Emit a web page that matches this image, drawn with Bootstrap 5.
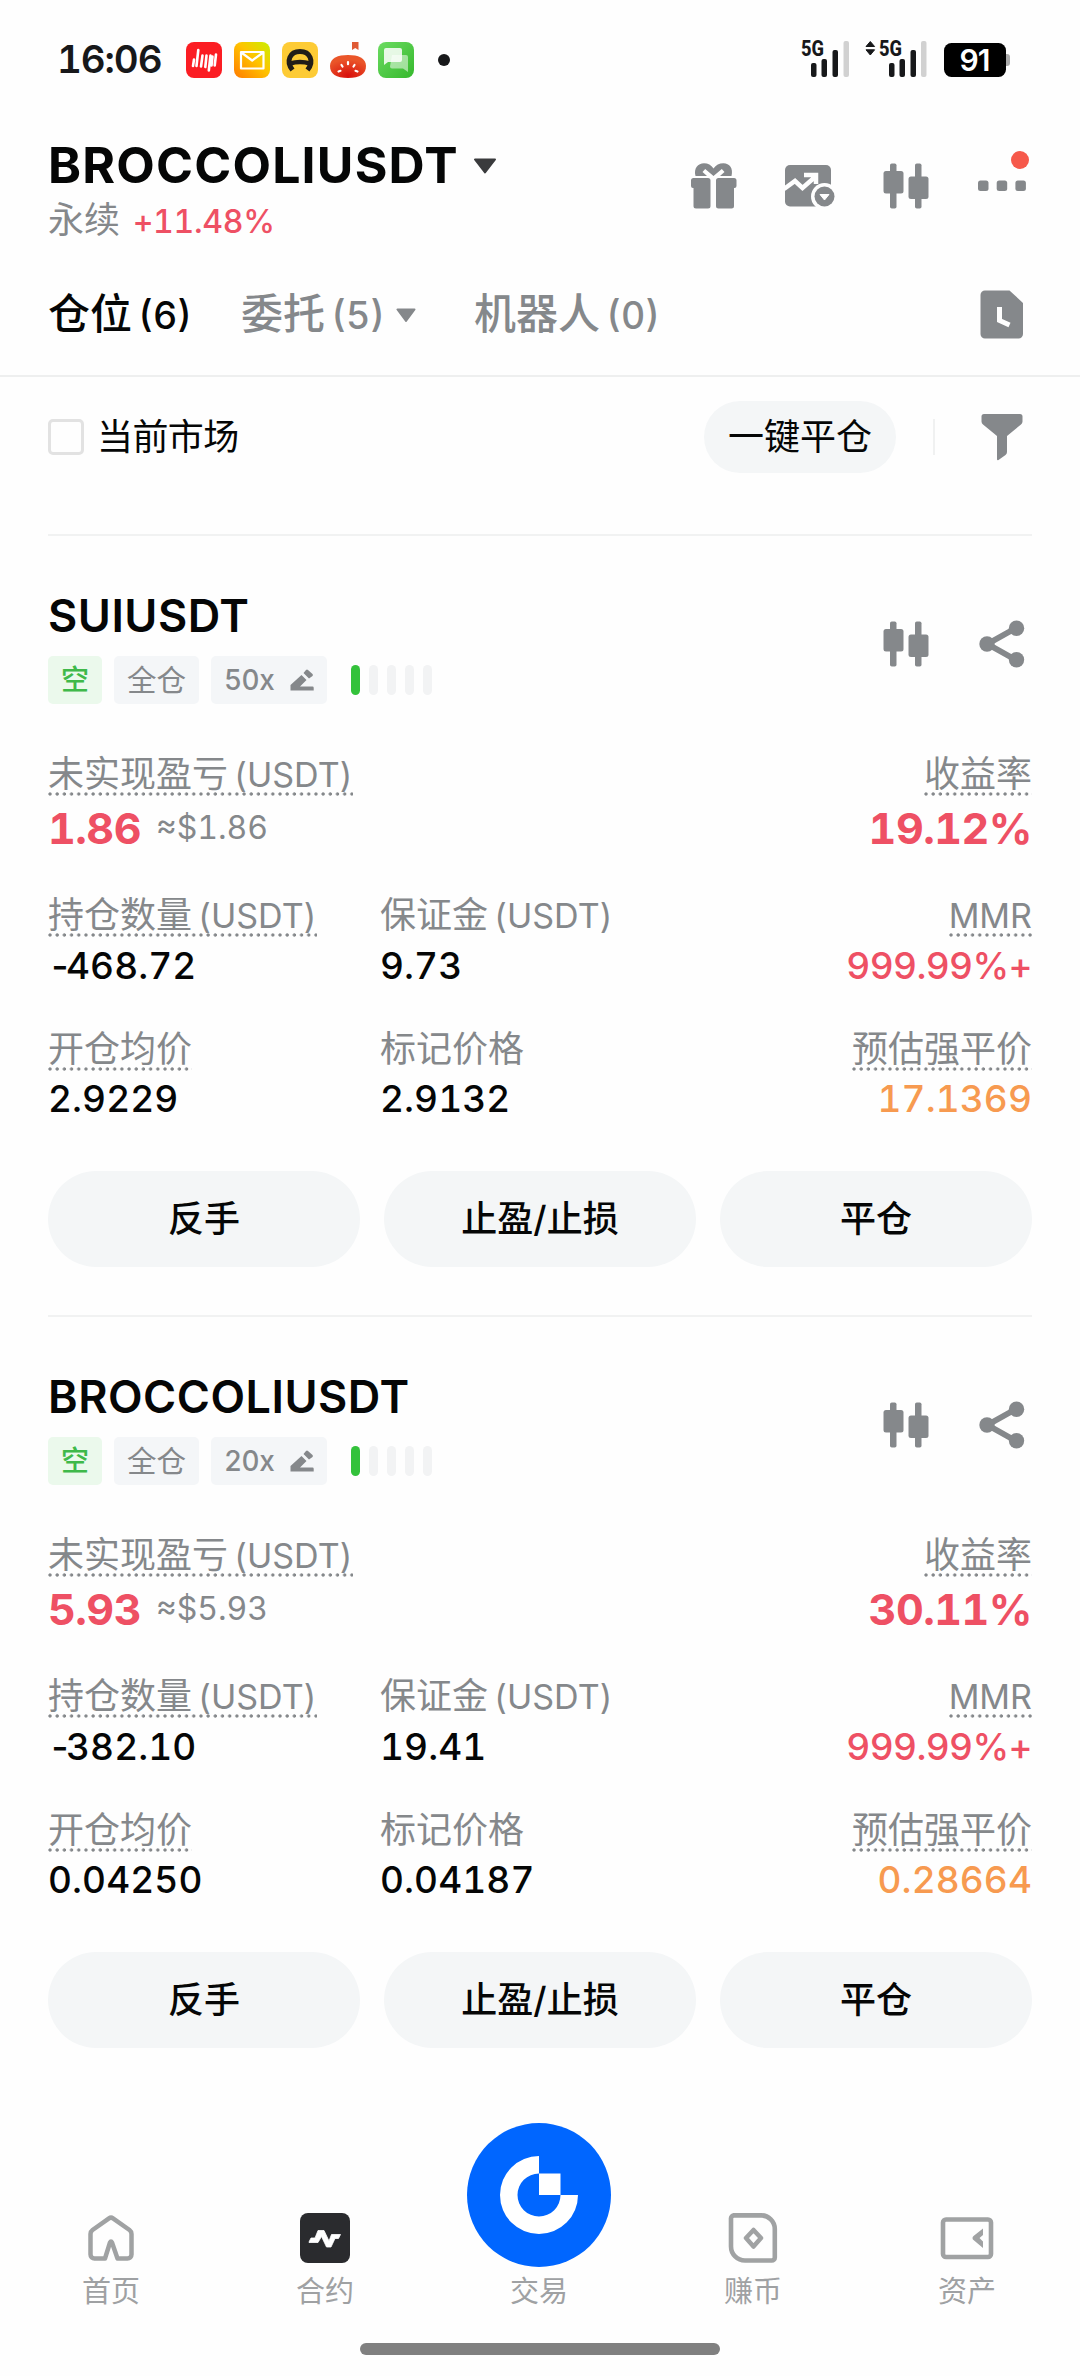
<!DOCTYPE html>
<html lang="zh-CN">
<head>
<meta charset="utf-8">
<meta name="viewport" content="width=device-width, initial-scale=1">
<title>仓位</title>
<link href="https://cdn.jsdelivr.net/npm/bootstrap@5.3.0/dist/css/bootstrap.min.css" rel="stylesheet">
<style>
body{width:1080px;height:2376px;overflow:hidden;background:#fefefe;color:#050606;font-family:Inter,"Noto Sans CJK SC",sans-serif;font-variant-numeric:tabular-nums}
svg{display:block;flex:none}
.gy{color:#85888b}.up{color:#ee5064}.warn{color:#f79a50}
.lat{font-size:.945em}
.statusbar{height:120px;padding:0 66px 0 57px;color:#17181a}
.clock{font-size:38.5px;font-weight:600;line-height:46px;height:48px;width:129px;letter-spacing:-1.1px}
.apps{gap:12px}
.pairhead{height:136px;padding:0 54px 0 48px}
.pairtext{padding-top:15px}
.pairname{font-size:50px;font-weight:700;line-height:60px;letter-spacing:1.2px;margin-bottom:1px}
.pairsub{font-size:36px;line-height:48px;word-spacing:3px}
.pct{font-size:32px;font-weight:500;letter-spacing:-.3px}
.headicons{gap:46px;padding-top:42px}
.reddot{position:absolute;width:18px;height:18px;border-radius:50%;background:#f6594b;right:-3px;top:-11px}
.tabrow{height:121px;padding:0 54px 2px 48px;border-bottom:2px solid #eeefef;font-size:42px;line-height:60px;font-weight:500;word-spacing:-5px}
.tabrow .lat{font-size:37.5px}
.tab2{width:233px;gap:11px}
.filterrow{height:157px;padding:24px 54px 0 48px}
.filterrow>div{height:72px}
.tick{width:36px;height:36px;border:3px solid #e2e2e2;border-radius:5px}
.ticklabel{font-size:36px;margin-left:13px;letter-spacing:-.6px}
.pillbtn,.actbtn{background:#f4f6f7;border:0;border-radius:50px;color:#050606;font-size:36px}
.pillbtn{width:192px;height:72px;padding:0;margin-right:37px}
.vrule{width:2px;height:36px;background:#f0f1f1;margin-right:43px}
.position{height:781px;margin:0 48px;border-top:2px solid #f1f2f2;padding-top:52px}
.symname{font-size:45px;font-weight:600;line-height:56px;letter-spacing:.5px}
.tags{margin-top:12px;gap:12px}
.tag{height:48px;line-height:48px;font-size:29.5px;background:#f4f6f8;border-radius:5px;color:#85888b;padding:0 13px}
.tag.short{background:#ebf9ec;color:#3fb94a;font-size:28px;font-weight:500}
.tag .lat{font-weight:500;letter-spacing:-.5px}
.risks{gap:9px;margin-left:12px}
.risk{width:9px;height:30px;border-radius:5px;background:#f2f3f4}
.risk.on{background:#33c23b}
.cardicons{gap:48px;padding:32px 6px 0 0}
.lbl{font-size:36px;line-height:50px;height:50px;color:#85888b;white-space:nowrap;word-spacing:-4px}
.lbl .tip{display:inline-block;height:50px;background:radial-gradient(circle at 2px 2px,#85888b 1.3px,transparent 2px) 0 43px/7.2px 4px repeat-x}
.big{font-size:43px;font-weight:700;line-height:52px;height:52px;margin-top:3px;letter-spacing:-.5px}
.big .approx{font-size:32px;font-weight:400;line-height:44px;letter-spacing:0;margin-left:15px}
.val{font-size:37px;font-weight:500;line-height:48px;margin-top:1.5px;letter-spacing:.1px}
.val.up{letter-spacing:-.6px}
.neg{letter-spacing:-6px}
.r1{margin-top:45px}.r2{margin-top:36px}.r3{margin-top:34px}
.c1{width:332px}.c2{flex:1}
.acts{margin-top:48px;gap:24px}
.actbtn{flex:1;height:96px;font-weight:500;padding:0;line-height:96px}
.tabbar{height:282px;padding:27px 6px 0 4px;color:#9fa1a3;font-size:29px;position:relative}
.tabbar>div{flex:1;padding-top:90px}
.tabbar>.mid{padding-top:0}
.tabbar .t{line-height:40px;margin-top:9px}
.homebar{position:absolute;left:360px;top:247px;width:360px;height:12px;border-radius:6px;background:#808080}
</style>
<script src="https://cdn.jsdelivr.net/npm/bootstrap@5.3.0/dist/js/bootstrap.bundle.min.js"></script>
</head>
<body>
<svg width="0" height="0" class="position-absolute">
<defs>
<linearGradient id="mailg" x1="1" y1="0" x2="0" y2="1"><stop offset="0" stop-color="#c8f000"/><stop offset=".45" stop-color="#ffc400"/><stop offset="1" stop-color="#ff7a00"/></linearGradient>
<linearGradient id="msgg" x1="0" y1="0" x2="1" y2="1"><stop offset="0" stop-color="#6cdc62"/><stop offset="1" stop-color="#35b82c"/></linearGradient>
<radialGradient id="tomg" cx=".5" cy=".9" r=".7"><stop offset="0" stop-color="#d80f0c"/><stop offset="1" stop-color="#ea5529"/></radialGradient>
<symbol id="candles" viewBox="0 0 48 48"><g fill="#85888b"><rect x="8" y="1.500" width="6.500" height="45" rx="1.800"/><rect x="1.500" y="9" width="20" height="22.500" rx="2.500"/><rect x="33" y="1.500" width="6.500" height="45" rx="1.800"/><rect x="26.500" y="14.500" width="20" height="22.500" rx="2.500"/></g></symbol>
<symbol id="share" viewBox="0 0 48 48"><path d="M38 8 9.500 24 38 40" fill="none" stroke="#85888b" stroke-width="6"/><g fill="#85888b"><circle cx="38.500" cy="8.300" r="7.700"/><circle cx="9" cy="24" r="7.700"/><circle cx="38.500" cy="39.700" r="7.700"/></g></symbol>
<symbol id="pen" viewBox="0 0 24 24"><path d="M.5 22.500v-5.500L11.500 7l5 5-6.500 6.500H22.500a1.200 1.200 0 0 1 1.200 1.200v2.800zM13.500 5l2.500-3a1.500 1.500 0 0 1 2 0l4.500 4a1.500 1.500 0 0 1 0 2L19 10.500z" fill="#85888b"/></symbol>
</defs>
</svg>

<header class="statusbar d-flex align-items-center">
  <div class="clock">16:06</div>
  <div class="apps d-flex align-items-center">
    <svg width="36" height="36" viewBox="0 0 36 36"><rect width="36" height="36" rx="8" fill="#fb1d23"/><g stroke="#fff" stroke-width="2.600" stroke-linecap="round"><path d="M8 17.500 7 24M12.300 8 10.500 24M16.500 13.500 15 24.500M20.500 13.500 19.300 25M24.500 13.500 22.800 28.500M30 12.500 28.700 23.500M26.500 14.500l-1 9"/></g></svg>
    <svg width="36" height="36" viewBox="0 0 36 36"><rect width="36" height="36" rx="8" fill="url(#mailg)"/><path d="M7 10h22.500v16.500H7zM8 11l10.200 7.500L28.500 11" fill="none" stroke="#fff" stroke-width="2.200" stroke-linejoin="round"/></svg>
    <svg width="36" height="36" viewBox="0 0 36 36"><rect width="36" height="36" rx="8" fill="#fdcb35"/><path d="M10.500 28C3.500 19 8 9.500 18 9.500S32.500 19 25.500 28" fill="none" stroke="#211d18" stroke-width="5"/><path d="M8 21.500q10-3 20 0" fill="none" stroke="#211d18" stroke-width="4.500"/></svg>
    <svg width="36" height="36" viewBox="0 0 36 36"><path d="M22 0h6.500v8l-3.250-2L22 8z" fill="#df5a35"/><path d="M0 24C0 16 8 13 18 13s18 3 18 11-6 12-18 12S0 32 0 24z" fill="url(#tomg)"/><g stroke="#fff" stroke-width="2.200" stroke-linecap="round"><path d="M18 20v2.200M11.500 23l1 1.500M24.500 23l-1 1.500M8.500 29.500l2-.7M27.500 29.500l-2-.7"/></g></svg>
    <svg width="36" height="36" viewBox="0 0 36 36"><rect width="36" height="36" rx="8" fill="url(#msgg)"/><path d="M14 13h14a2 2 0 0 1 2 2v15l-5-3.500H14a2 2 0 0 1-2-2z" fill="#fff" opacity=".5"/><path d="M6 8a2 2 0 0 1 2-2h14a2 2 0 0 1 2 2v10a2 2 0 0 1-2 2H10l-4 3z" fill="#fff" opacity=".85"/></svg>
  </div>
  <svg class="ms-4" width="12" height="12"><circle cx="6" cy="6" r="6" fill="#17181a"/></svg>
  <svg class="ms-auto" width="214" height="48" viewBox="0 0 214 48"><g fill="#17181a"><text x="1" y="20" font-family="Roboto" font-weight="800" font-size="22" textLength="23" lengthAdjust="spacingAndGlyphs">5G</text><rect x="11" y="27" width="5.500" height="14" rx="2"/><rect x="21.500" y="23" width="5.500" height="18" rx="2"/><rect x="32.500" y="14" width="5.500" height="27" rx="2"/><text x="79" y="20" font-family="Roboto" font-weight="800" font-size="22" textLength="23" lengthAdjust="spacingAndGlyphs">5G</text><path d="M66 10.500 70.300 5.500l4.300 5zM66 13.800h8.600L70.300 19z" stroke="#17181a" stroke-width="1" stroke-linejoin="round"/><rect x="89" y="27" width="5.500" height="14" rx="2"/><rect x="99.500" y="23" width="5.500" height="18" rx="2"/><rect x="110.500" y="14" width="5.500" height="27" rx="2"/></g><g fill="#d1d1d1"><rect x="43.500" y="5" width="5.500" height="36" rx="2"/><rect x="121" y="5" width="5.500" height="36" rx="2"/></g><rect x="200" y="18" width="10" height="12" rx="3" fill="#aaa"/><rect x="144" y="7" width="62" height="34" rx="7.500" fill="#000"/><text x="174.500" y="35" text-anchor="middle" font-family="Inter" font-weight="600" font-size="30" letter-spacing="-1" fill="#fff" style="font-variant-numeric:normal">91</text></svg>
</header>

<section class="pairhead d-flex">
  <div class="pairtext">
    <div class="d-flex align-items-center"><div class="pairname">BROCCOLIUSDT</div>
      <svg style="margin-left:14px" width="24" height="16" viewBox="0 0 24 16"><path d="M2 1.500h20L12 14.500z" fill="#3a3b3d" stroke="#3a3b3d" stroke-width="2" stroke-linejoin="round"/></svg></div>
    <div class="pairsub gy">永续 <span class="pct up">+11.48%</span></div>
  </div>
  <div class="headicons d-flex ms-auto">
    <svg width="48" height="48" viewBox="0 0 48 48"><g fill="#85888b"><path d="M5.500 14C3.500 6 8 1.200 14 1.200q6 0 9.500 5.300 3.500-5.300 10-5.300c6 0 10 4.800 8 12.800H30l4.500-4-2.700-3-8.300 7-8.300-7-2.700 3 4.500 4z"/><path d="M3.500 16H18a2.500 2.500 0 0 1 2.500 2.500V44a2.500 2.500 0 0 1-2.500 2.500H6A2.500 2.500 0 0 1 3.500 44V26H3a2 2 0 0 1-2-2v-5.500A2.500 2.500 0 0 1 3.500 16zM28.500 16H44a2.500 2.500 0 0 1 2.500 2.500V24a2 2 0 0 1-2 2H44v18a2.500 2.500 0 0 1-2.500 2.500h-13A2.500 2.500 0 0 1 26 44V18.500a2.500 2.500 0 0 1 2.500-2.500z"/></g></svg>
    <svg width="52" height="48" viewBox="0 0 52 48"><rect x="1" y="3" width="46" height="41.500" rx="5" fill="#85888b"/><path d="M0 27 11 19l7.500 7L31 15M20 13h12v9" fill="none" stroke="#fefefe" stroke-width="4.500"/><circle cx="40.500" cy="34.500" r="13.500" fill="#fefefe"/><circle cx="40.500" cy="34.500" r="10" fill="#85888b"/><path d="M36 32.500h9L40.500 38z" fill="#fefefe" stroke="#fefefe" stroke-linejoin="round"/></svg>
    <svg width="48" height="48"><use href="#candles"/></svg>
    <div class="position-relative" style="margin-left:2px;height:48px"><svg width="48" height="48" viewBox="0 0 48 48"><g fill="#85888b"><rect x="0" y="18.500" width="10.500" height="10.500" rx="2.500"/><rect x="18.700" y="18.500" width="10.500" height="10.500" rx="2.500"/><rect x="37.400" y="18.500" width="10.500" height="10.500" rx="2.500"/></g></svg><span class="reddot"></span></div>
  </div>
</section>

<nav class="tabrow d-flex align-items-center">
  <div style="width:193px">仓位 <span class="lat">(6)</span></div>
  <div class="tab2 gy d-flex align-items-center"><span>委托 <span class="lat">(5)</span></span><svg width="20" height="14" viewBox="0 0 20 14"><path d="M1.500 1.500h17L10 13z" fill="#85888b" stroke="#85888b" stroke-width="2" stroke-linejoin="round"/></svg></div>
  <div class="gy">机器人 <span class="lat">(0)</span></div>
  <svg class="ms-auto" width="48" height="50" viewBox="0 0 48 50"><path d="M7 1.500H31.500L45 14v31a4.500 4.500 0 0 1-4.500 4.500H7A4.500 4.500 0 0 1 2.500 45V6A4.500 4.500 0 0 1 7 1.500z" transform="translate(0 -1)" fill="#85888b"/><path d="M21.500 17v13.500L31.500 35" fill="none" stroke="#fefefe" stroke-width="5"/></svg>
</nav>

<section class="filterrow d-flex">
  <div class="d-flex align-items-center"><div class="tick"></div><div class="ticklabel">当前市场</div></div>
  <div class="d-flex align-items-center ms-auto"><button class="btn pillbtn">一键平仓</button><span class="vrule"></span>
  <svg width="48" height="50" viewBox="0 0 48 50"><path d="M6 2H42a2.500 2.500 0 0 1 2.500 2.500V9.500a4 4 0 0 1-1.500 3L29 24V40a4 4 0 0 1-1.500 3L20.500 48a1 1 0 0 1-1.500-1V24L5 12.500a4 4 0 0 1-1.500-3V4.500A2.500 2.500 0 0 1 6 2z" fill="#85888b"/></svg></div>
</section>

<article class="position">
  <div class="d-flex justify-content-between">
    <div><div class="symname">SUIUSDT</div>
      <div class="tags d-flex align-items-center"><span class="tag short">空</span><span class="tag">全仓</span><span class="tag d-flex align-items-center"><span class="lat">50x</span><svg class="ms-3" width="24" height="24"><use href="#pen"/></svg></span>
      <div class="risks d-flex"><i class="risk on"></i><i class="risk"></i><i class="risk"></i><i class="risk"></i><i class="risk"></i></div></div></div>
    <div class="cardicons d-flex"><svg width="48" height="48"><use href="#candles"/></svg><svg width="48" height="48"><use href="#share"/></svg></div>
  </div>
  <div class="r1 d-flex justify-content-between">
    <div><div class="lbl"><span class="tip">未实现盈亏 <span class="lat">(USDT)</span></span></div><div class="big up d-flex align-items-center"><span>1.86</span><span class="approx gy">≈$1.86</span></div></div>
    <div class="text-end"><div class="lbl"><span class="tip">收益率</span></div><div class="big up">19.12%</div></div>
  </div>
  <div class="r2 d-flex">
    <div class="c1"><div class="lbl"><span class="tip">持仓数量 <span class="lat">(USDT)</span></span></div><div class="val"><span class="neg">-</span>468.72</div></div>
    <div class="c2"><div class="lbl">保证金 <span class="lat">(USDT)</span></div><div class="val">9.73</div></div>
    <div class="text-end"><div class="lbl"><span class="tip"><span class="lat">MMR</span></span></div><div class="val up">999.99%+</div></div>
  </div>
  <div class="r3 d-flex">
    <div class="c1"><div class="lbl"><span class="tip">开仓均价</span></div><div class="val">2.9229</div></div>
    <div class="c2"><div class="lbl">标记价格</div><div class="val">2.9132</div></div>
    <div class="text-end"><div class="lbl"><span class="tip">预估强平价</span></div><div class="val warn">17.1369</div></div>
  </div>
  <div class="acts d-flex"><button class="btn actbtn">反手</button><button class="btn actbtn">止盈/止损</button><button class="btn actbtn">平仓</button></div>
</article>

<article class="position">
  <div class="d-flex justify-content-between">
    <div><div class="symname">BROCCOLIUSDT</div>
      <div class="tags d-flex align-items-center"><span class="tag short">空</span><span class="tag">全仓</span><span class="tag d-flex align-items-center"><span class="lat">20x</span><svg class="ms-3" width="24" height="24"><use href="#pen"/></svg></span>
      <div class="risks d-flex"><i class="risk on"></i><i class="risk"></i><i class="risk"></i><i class="risk"></i><i class="risk"></i></div></div></div>
    <div class="cardicons d-flex"><svg width="48" height="48"><use href="#candles"/></svg><svg width="48" height="48"><use href="#share"/></svg></div>
  </div>
  <div class="r1 d-flex justify-content-between">
    <div><div class="lbl"><span class="tip">未实现盈亏 <span class="lat">(USDT)</span></span></div><div class="big up d-flex align-items-center"><span>5.93</span><span class="approx gy">≈$5.93</span></div></div>
    <div class="text-end"><div class="lbl"><span class="tip">收益率</span></div><div class="big up">30.11%</div></div>
  </div>
  <div class="r2 d-flex">
    <div class="c1"><div class="lbl"><span class="tip">持仓数量 <span class="lat">(USDT)</span></span></div><div class="val"><span class="neg">-</span>382.10</div></div>
    <div class="c2"><div class="lbl">保证金 <span class="lat">(USDT)</span></div><div class="val">19.41</div></div>
    <div class="text-end"><div class="lbl"><span class="tip"><span class="lat">MMR</span></span></div><div class="val up">999.99%+</div></div>
  </div>
  <div class="r3 d-flex">
    <div class="c1"><div class="lbl"><span class="tip">开仓均价</span></div><div class="val">0.04250</div></div>
    <div class="c2"><div class="lbl">标记价格</div><div class="val">0.04187</div></div>
    <div class="text-end"><div class="lbl"><span class="tip">预估强平价</span></div><div class="val warn">0.28664</div></div>
  </div>
  <div class="acts d-flex"><button class="btn actbtn">反手</button><button class="btn actbtn">止盈/止损</button><button class="btn actbtn">平仓</button></div>
</article>

<nav class="tabbar d-flex text-center">
  <div><svg class="mx-auto" width="50" height="50" viewBox="0 0 50 50"><path d="M19 45H8.500a4 4 0 0 1-4-4V20.500a5 5 0 0 1 2-4L23 4.800a3.500 3.500 0 0 1 4 0L43.500 16.500a5 5 0 0 1 2 4V41a4 4 0 0 1-4 4H31.500L26 29q-1-2-2 0z" transform="translate(0 .5)" fill="none" stroke="#a0a2a3" stroke-width="4.500" stroke-linejoin="round"/></svg><div class="t">首页</div></div>
  <div><svg class="mx-auto" width="50" height="50" viewBox="0 0 50 50"><rect width="50" height="50" rx="8" fill="#2a2b2e"/><path d="M9 29l2-4h4l3-7.500h6l5 10.500 2.500-6.500H40.500l-2 4H35l-4 8.500H26.500L21.500 23.500 18 29.500H9z" fill="#fff" stroke="#fff" stroke-width=".8" stroke-linejoin="round"/></svg><div class="t">合约</div></div>
  <div class="mid"><svg class="mx-auto" width="144" height="144" viewBox="0 0 144 144"><circle cx="72" cy="72" r="72" fill="#06f"/><path d="M72 33A39 39 0 1 0 111 72H93.500A21.500 21.500 0 1 1 72 50.500z" fill="#fff"/><path d="M72 50.500h21.500V72H72z" fill="#fff"/></svg><div class="t" style="margin-top:5px">交易</div></div>
  <div><svg class="mx-auto" width="50" height="50" viewBox="0 0 50 50"><path d="M5 2.400H33A13.500 13.500 0 0 1 46.800 16V44.500a3 3 0 0 1-3 3H17A14 14 0 0 1 3 33.500V5.500a3 3 0 0 1 3-3.100z" fill="none" stroke="#a0a2a3" stroke-width="4.600"/><path d="M25.500 17 33 25l-7.500 8.500L18 25z" fill="none" stroke="#a0a2a3" stroke-width="4.500" stroke-linejoin="round"/></svg><div class="t">赚币</div></div>
  <div><svg class="mx-auto" width="54" height="50" viewBox="0 0 54 50"><rect x="3" y="6.500" width="48" height="37.500" rx="3" fill="none" stroke="#a0a2a3" stroke-width="4.600"/><path d="M43 15.500V22l-3.500 3L43 28.500V35L33.500 27a2.500 2.500 0 0 1 0-4z" fill="#a0a2a3"/></svg><div class="t">资产</div></div>
  <div class="homebar p-0"></div>
</nav>
</body>
</html>
